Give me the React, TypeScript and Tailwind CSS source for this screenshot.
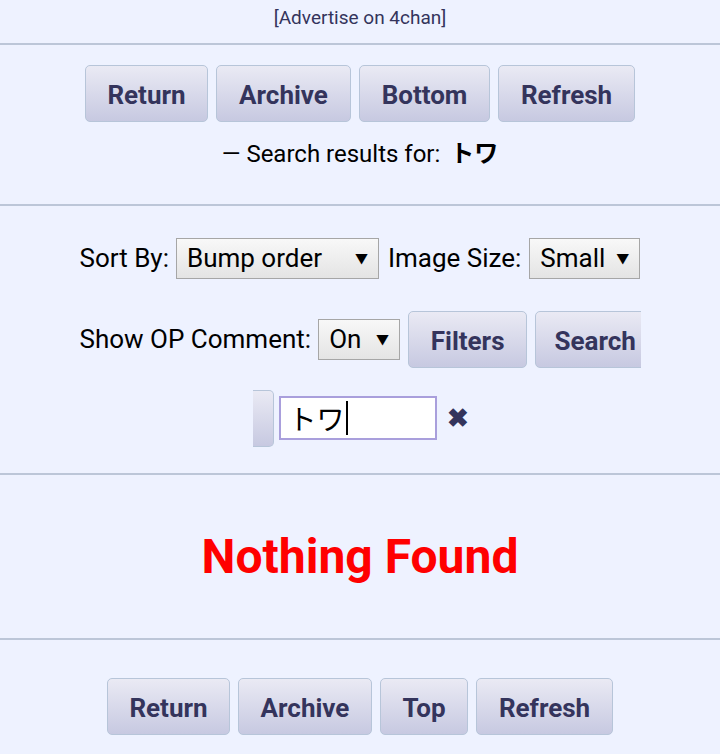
import { useState } from "react";

const btn =
  "flex h-[57px] items-center justify-center rounded-[5px] border border-[#b7c5d9] bg-gradient-to-b from-[#eaeaf4] to-[#c7c9e1] pt-[3px] text-[26px] font-bold text-[#34345c]";

function NavButtons({ middle }: { middle: string }) {
  const widths = middle === "Top" ? [123, 134, 88, 137] : [123, 135, 131, 137];
  const labels = ["Return", "Archive", middle, "Refresh"];
  return (
    <div className="flex justify-center gap-2">
      {labels.map((label, i) => (
        <button key={label} type="button" className={btn} style={{ width: widths[i] }}>
          {label}
        </button>
      ))}
    </div>
  );
}

function Select({ value, width }: { value: string; width: number }) {
  return (
    <div
      className="flex h-[41px] shrink-0 items-center justify-between border border-[#a6a6a6] bg-gradient-to-b from-[#f8f8f8] to-[#e4e4e4] pl-[10px] pr-[10px] text-[26px] text-black"
      style={{ width }}
    >
      <span>{value}</span>
      <span className="text-[13px]">▼</span>
    </div>
  );
}

export default function App() {
  const [query, setQuery] = useState("トワ");

  return (
    <div
      className="min-h-[754px] bg-[#eef2ff] text-black"
      style={{ fontFamily: "Roboto, 'Noto Sans CJK JP', sans-serif" }}
    >
      <div className="flex h-[43px] items-start justify-center pt-[4px] text-[19px] text-[#34345c]">
        [Advertise on 4chan]
      </div>
      <hr className="border-t-2 border-[#bcc6d8]" />

      <div className="pt-[20px]">
        <NavButtons middle="Bottom" />
        <div className="mt-[14px] flex items-center justify-center gap-[10px] text-[24px]">
          <span>— Search results for:</span>
          <b>トワ</b>
        </div>
      </div>

      <hr className="mt-[32px] border-t-2 border-[#bcc6d8]" />

      <div className="mx-auto w-[561px] overflow-hidden pt-[32px] text-[26px]">
        <div className="flex items-center whitespace-nowrap">
          <span>Sort By:</span>
          <div className="ml-[7px]">
            <Select value="Bump order" width={203} />
          </div>
          <span className="ml-[9px]">Image Size:</span>
          <div className="ml-[8px]">
            <Select value="Small" width={111} />
          </div>
        </div>
        <div className="mt-[32px] flex items-center gap-[8px] whitespace-nowrap">
          <span className="mr-[-1px]">Show OP Comment:</span>
          <Select value="On" width={82} />
          <button type="button" className={`${btn} w-[119px] shrink-0`}>
            Filters
          </button>
          <button type="button" className={`${btn} w-[120px] shrink-0`}>
            Search
          </button>
        </div>
        <div className="mt-[22px] flex items-center">
          <div className="ml-[173px] h-[57px] w-[21px] rounded-r-[5px] border-y border-r border-[#b7c5d9] bg-gradient-to-b from-[#eaeaf4] to-[#c7c9e1]" />
          <div className="relative ml-[5px]">
            <input
              value={query}
              onChange={(e) => setQuery(e.target.value)}
              className="h-[44px] w-[158px] border-2 border-[#a99fdc] bg-white px-[8px] text-[28px] text-black outline-none"
            />
            {/* text caret as shown in the screenshot */}
            <span className="pointer-events-none absolute left-[67px] top-[5px] h-[34px] w-[2px] bg-black" />
          </div>
          <span className="ml-[10px] text-[26px] font-bold text-[#34345c]">✖</span>
        </div>
      </div>

      <hr className="mt-[26px] border-t-2 border-[#bcc6d8]" />

      <div className="flex h-[163px] items-center justify-center text-[48px] font-bold text-[#ff0000]">
        Nothing Found
      </div>

      <hr className="border-t-2 border-[#bcc6d8]" />

      <div className="pt-[38px] pb-[20px]">
        <NavButtons middle="Top" />
      </div>
    </div>
  );
}
